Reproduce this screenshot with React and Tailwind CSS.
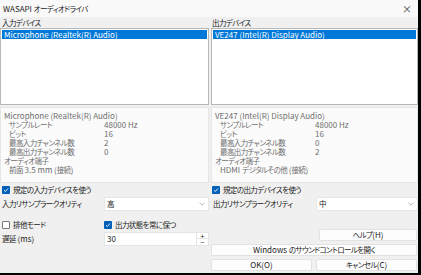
import React from "react";

const F = { fontFamily: '"Noto Sans CJK JP", "Noto Sans", sans-serif' };

function J({ t }) {
  const parts = t.split(/([\u3000-\u9fff\uff00-\uffef]+)/);
  return (
    <span className="whitespace-nowrap">
      {parts.map((p, i) =>
        /[\u3000-\u9fff\uff00-\uffef]/.test(p) ? (
          <span key={i} className="text-[7.5px] tracking-[-0.6px]">{p}</span>
        ) : (
          <span key={i}>{p}</span>
        )
      )}
    </span>
  );
}

function Check({ label }) {
  return (
    <div className="flex items-center h-[10px] gap-[3px]">
      <div className="w-[8px] h-[8px] rounded-[1px] bg-[#005fb8] flex items-center justify-center shrink-0">
        <svg width="6" height="6" viewBox="0 0 6 6"><path d="M1 3.2 L2.4 4.5 L5 1.5" stroke="white" strokeWidth="0.9" fill="none" /></svg>
      </div>
      <J t={label} />
    </div>
  );
}

function Uncheck({ label }) {
  return (
    <div className="flex items-center h-[10px] gap-[3px]">
      <div className="w-[8px] h-[8px] rounded-[1px] border border-[#777] bg-white shrink-0" />
      <J t={label} />
    </div>
  );
}

function Combo({ value }) {
  return (
    <div className="h-[14px] bg-white border border-[#e5e5e5] flex items-center justify-between pl-[2px] pr-[3px]">
      <J t={value} />
      <svg width="6" height="4" viewBox="0 0 6 4"><path d="M0.5 0.8 L3 3 L5.5 0.8" stroke="#999" strokeWidth="0.7" fill="none" /></svg>
    </div>
  );
}

function Info({ name, rows, port }) {
  return (
    <div className="h-[76px] bg-[#fbfbfb] border border-[#e6e6e6] text-[#6e6e6e] pl-[3px] pt-[3px] leading-[9px] flex flex-col">
      <div className="h-[9px]">{name}</div>
      {rows.map(([k, v]) => (
        <div key={k} className="flex h-[9px]">
          <span className="w-[100px] pl-[5px]"><J t={k} /></span>
          <span>{v}</span>
        </div>
      ))}
      <div className="h-[9px]"><J t="オーディオ端子" /></div>
      <div className="h-[9px] pl-[5px]"><J t={port} /></div>
    </div>
  );
}

function Btn({ children, className = "" }) {
  return (
    <div className={"h-[12px] bg-[#fdfdfd] border border-[#e2e2e2] rounded-[2px] flex items-center justify-center " + className}>
      {children}
    </div>
  );
}

export default function App() {
  return (
    <div className="w-[421px] h-[275px] bg-black overflow-hidden">
      <div className="w-[418px] h-[273px] bg-[#f0f0f0] flex flex-col text-[8px] leading-[10px] text-[#1a1a1a] overflow-hidden [font-feature-settings:'palt']" style={F}>
        <div className="h-[17px] bg-[#f9f9f9] flex items-center justify-between pl-[3px] pr-[6px] shrink-0">
          <J t="WASAPI オーディオドライバ" />
          <span className="text-[10px] text-[#444]">×</span>
        </div>
        <div className="grid grid-cols-[209px_207px] gap-x-[2px]">
          {/* left */}
          <div className="flex flex-col">
            <div className="h-[11px] flex items-center pl-[2px]"><J t="入力デバイス" /></div>
            <div className="h-[77px] bg-white border border-[#b8b8b8] p-[1px]">
              <div className="h-[9px] bg-[#0078d7] text-white flex items-center pl-[2px]">Microphone (Realtek(R) Audio)</div>
            </div>
            <div className="h-[2px]" />
            <Info
              name="Microphone (Realtek(R) Audio)"
              rows={[["サンプルレート", "48000 Hz"], ["ビット", "16"], ["最高入力チャンネル数", "2"], ["最高出力チャンネル数", "0"]]}
              port="前面 3.5 mm (接続)"
            />
            <div className="mt-[2px] pl-[2px]"><Check label="規定の入力デバイスを使う" /></div>
            <div className="mt-[2px] flex items-center">
              <span className="w-[104px] pl-[2px]"><J t="入力リサンプラークオリティ" /></span>
              <div className="flex-1"><Combo value="高" /></div>
            </div>
          </div>
          {/* right */}
          <div className="flex flex-col">
            <div className="h-[11px] flex items-center pl-[1px]"><J t="出力デバイス" /></div>
            <div className="h-[77px] bg-white border border-[#b8b8b8] p-[1px]">
              <div className="h-[9px] bg-[#0078d7] text-white flex items-center pl-[2px]">VE247 (Intel(R) Display Audio)</div>
            </div>
            <div className="h-[2px]" />
            <Info
              name="VE247 (Intel(R) Display Audio)"
              rows={[["サンプルレート", "48000 Hz"], ["ビット", "16"], ["最高入力チャンネル数", "0"], ["最高出力チャンネル数", "2"]]}
              port="HDMI デジタルその他 (接続)"
            />
            <div className="mt-[2px] pl-[1px]"><Check label="規定の出力デバイスを使う" /></div>
            <div className="mt-[2px] flex items-center">
              <span className="w-[105px] pl-[2px]"><J t="出力リサンプラークオリティ" /></span>
              <div className="flex-1"><Combo value="中" /></div>
            </div>
          </div>
        </div>
        <div className="grid grid-cols-[209px_207px] gap-x-[2px] mt-[9px]">
          <div className="flex flex-col">
            <div className="flex">
              <div className="w-[104px] pl-[2px]"><Uncheck label="排他モード" /></div>
              <Check label="出力状態を常に保つ" />
            </div>
            <div className="flex items-center mt-[2px]">
              <span className="w-[104px] pl-[2px]"><J t="遅延 (ms)" /></span>
              <div className="flex-1 flex h-[14px]">
                <div className="flex-1 bg-white border border-[#e5e5e5] flex items-center pl-[2px]">30</div>
                <div className="w-[12px] flex flex-col bg-white border border-l-0 border-[#e5e5e5] text-[7px] leading-[6px] items-center">
                  <span className="h-[6px] w-full text-center border-b border-[#e5e5e5]">+</span>
                  <span className="h-[6px]">−</span>
                </div>
              </div>
            </div>
          </div>
          <div className="flex flex-col gap-[3px] pt-[9px] pr-[1px]">
            <div className="flex justify-end"><Btn className="w-[98px]"><J t="ヘルプ(H)" /></Btn></div>
            <Btn><J t="Windows のサウンドコントロールを開く" /></Btn>
            <div className="flex gap-[4px]">
              <Btn className="w-[101px]">OK(O)</Btn>
              <Btn className="flex-1"><J t="キャンセル(C)" /></Btn>
            </div>
          </div>
        </div>
      </div>
    </div>
  );
}
